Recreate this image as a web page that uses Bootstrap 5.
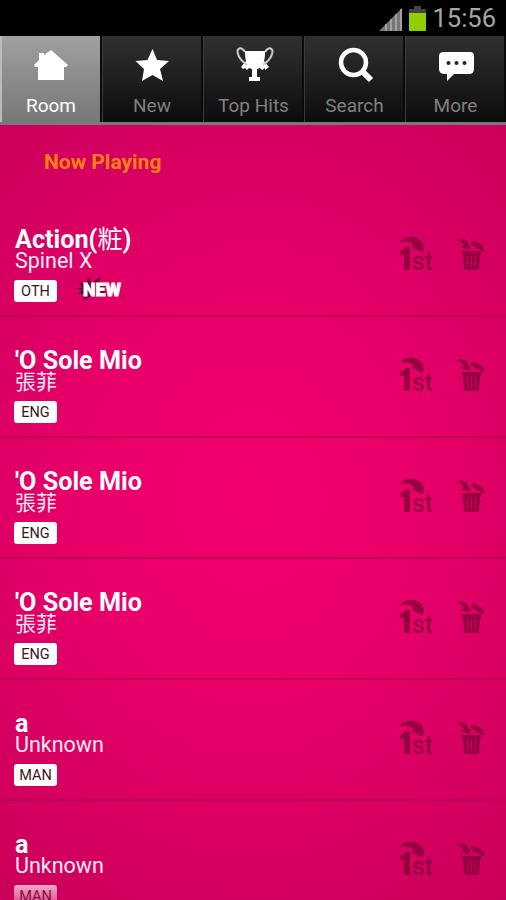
<!DOCTYPE html>
<html lang="en">
<head>
<meta charset="utf-8">
<meta name="viewport" content="width=device-width, initial-scale=1">
<title>Room</title>
<link href="https://cdn.jsdelivr.net/npm/bootstrap@5.3.0/dist/css/bootstrap.min.css" rel="stylesheet">
<style>
body{font-family:Roboto,"Noto Sans CJK TC",sans-serif;background:#000;height:900px;overflow:hidden}
.status{height:36px;padding-right:10px;color:#a6a6a6;font-size:25.5px;line-height:36px}
.tabs{height:89px;border-bottom:3px solid #77797a;background:#0d0d0d}
.tab-item{height:86px;color:#808080;font-size:19px;line-height:24px;background:linear-gradient(#303030,#0c0c0c);border-right:2px solid #0a0a0a;border-left:1px solid #3b3b3b;text-decoration:none;padding-top:9px}
.tab-item svg{width:44px;height:44px;display:block;margin-bottom:5px}
.tab-item.on{color:#fff;background:linear-gradient(#a0a0a0,#777);border-left:2px solid #bbb}
.tab-item:nth-child(n+3) span,.tab-item:nth-child(n+3) svg{margin-left:1px}
.room{height:775px;background:radial-gradient(ellipse 430px 520px at 250px 375px,#f2006d 0%,#eb006a 35%,#d70061 70%,#c80059 100%)}
.playing{height:71px;padding:23px 0 0 44px;color:#ff8110;font-size:21px;line-height:28px;font-weight:700}
.song{height:121px;padding:31px 17px 0 15px;border-bottom:2px solid #bd0053;color:#fff}
.title{font-size:25.2px;line-height:25px;font-weight:700;white-space:nowrap}
.title .han{font-weight:400}
.artist{font-size:21.5px;line-height:22px;margin-top:-2px;white-space:nowrap;color:#ffeaf3}
.artist.han{font-size:21px}
.lang{width:43px;height:22px;margin-top:8px;margin-left:-1px;border-radius:3px;background:#fff;color:#3a1420;font-size:14.5px;line-height:23px}
.song.fading .lang{background:linear-gradient(#f3a9ca,#d93b80);color:#820c45}
.burst{width:50px;height:32px;margin:1px 0 -12px 16px}
.tools{margin-top:8px;gap:20px;opacity:.78}
</style>
<script src="https://cdn.jsdelivr.net/npm/bootstrap@5.3.0/dist/js/bootstrap.bundle.min.js"></script>
</head>
<body>
<svg class="d-none">
  <symbol id="first" viewBox="0 0 36 40">
    <g fill="#840039">
      <path d="M1 7C5 1 15 0 21 5c3 2 4 6 4 10l-3 2-9-5 2-2C11 6 7 6 1 7Z"/>
      <path d="M11 12v23H5V20H1v-4c3-1 5-2 5-4Z"/>
      <text x="13" y="35" font-family="Roboto, sans-serif" font-weight="500" font-size="26" textLength="21" lengthAdjust="spacingAndGlyphs">st</text>
    </g>
  </symbol>
  <symbol id="trash" viewBox="0 0 34 40">
    <g fill="#840039">
      <path d="M0 5c6-3 12-2 14 5l2 1-2 4-8-3 3-2C7 7 5 5 0 5Z"/>
      <path d="m16 7 3-1 8 4 3 6-3 0-11-7Z"/>
      <path d="M7 16h19v4h-1l-1 13q0 2-2 2H11q-2 0-2-2L8 20H7Z"/>
    </g>
    <path d="m12.500 21 .5 11M16.500 21v11M20.500 21l-.5 11" stroke="#c80059" stroke-width="1.2"/>
  </symbol>
</svg>

<header class="status d-flex justify-content-end align-items-center">
  <svg width="50" height="28" viewBox="0 0 50 28" class="me-1">
    <path d="M1 27 24 4v23Z" fill="#777"/>
    <path d="M8 20v7M13 15v12M18 10v17M23 5v22" stroke="#b0b0b0" stroke-width="1.5"/>
    <path d="M31 5h5V2h7v3h5v5H31Z" fill="#444"/><path d="M31 9h17v18H31Z" fill="#8fce00"/>
  </svg>
  <span class="clock">15:56</span>
</header>

<nav class="tabs d-flex">
  <a class="tab-item on d-flex flex-column align-items-center col" href="#">
    <svg viewBox="0 0 44 44" fill="#fff"><path d="m5 20 5-5V8h5v2l7-5 17 15-2 2h-2v13H9V22H6Z"/></svg><span>Room</span></a>
  <a class="tab-item d-flex flex-column align-items-center col" href="#">
    <svg viewBox="0 0 44 44" fill="#fff"><path d="m22.500 4 4.500 11 12 1-9 8 3 12-10.500-6L12 36l2-12-8.500-8 12-1Z"/></svg><span>New</span></a>
  <a class="tab-item d-flex flex-column align-items-center col" href="#">
    <svg viewBox="0 0 44 44" fill="#fff"><path d="M13 6h20c0 3 0 7-1 10l5 6-4 3v-2l-3 2-2-2-3 1v8h3v4H17v-4h3v-8l-3-1-2 2-2-2-2 1-2-2 5-6c-1-3-1-7-1-10Z"/><path d="M13 7C9 1 4 3 6 9c1 5 5 8 9 11M33 7c4-6 9-4 7 2-1 5-5 8-9 11" fill="none" stroke="#ccc" stroke-width="2"/></svg><span>Top Hits</span></a>
  <a class="tab-item d-flex flex-column align-items-center col" href="#">
    <svg viewBox="0 0 44 44" fill="none" stroke="#fff"><circle cx="20.500" cy="17.500" r="12.500" stroke-width="4.500"/><path d="m29 26 9 9" stroke-width="6"/></svg><span>Search</span></a>
  <a class="tab-item d-flex flex-column align-items-center col" href="#">
    <svg viewBox="0 0 44 44" fill="#fff"><path d="M10 7h26q4 0 4 4v13q0 5-5 5H20l-7 7v-7h-2q-6 0-6-5V11q0-4 5-4Z"/><g fill="#222"><circle cx="14.500" cy="18" r="2"/><circle cx="22.500" cy="18" r="2"/><circle cx="30.500" cy="18" r="2"/></g></svg><span>More</span></a>
</nav>

<main class="room overflow-hidden">
  <div class="playing">Now Playing</div>
  <div class="song d-flex justify-content-between">
    <div><div class="title">Action(<span class="han">粧</span>)</div><div class="artist">Spinel X</div>
      <div class="d-flex"><div class="lang text-center">OTH</div>
        <svg class="burst" viewBox="0 0 50 32"><path d="m1 15 8 0-4-7 8 4 2-9 4 7 9-7-2 7 7 1-2 12-12 0-9 4 1-6-7 0 5-4Z" fill="#6b0830"/><text x="10" y="23" font-family="Roboto, sans-serif" font-weight="900" font-size="19" fill="#fff" stroke="#fff" stroke-width=".8" textLength="38" lengthAdjust="spacingAndGlyphs">NEW</text></svg></div></div>
    <div class="tools d-flex"><svg width="36" height="40"><use href="#first"/></svg><svg width="34" height="40"><use href="#trash"/></svg></div>
  </div>
  <div class="song d-flex justify-content-between">
    <div><div class="title">'O Sole Mio</div><div class="artist han">張菲</div><div class="lang text-center">ENG</div></div>
    <div class="tools d-flex"><svg width="36" height="40"><use href="#first"/></svg><svg width="34" height="40"><use href="#trash"/></svg></div>
  </div>
  <div class="song d-flex justify-content-between">
    <div><div class="title">'O Sole Mio</div><div class="artist han">張菲</div><div class="lang text-center">ENG</div></div>
    <div class="tools d-flex"><svg width="36" height="40"><use href="#first"/></svg><svg width="34" height="40"><use href="#trash"/></svg></div>
  </div>
  <div class="song d-flex justify-content-between">
    <div><div class="title">'O Sole Mio</div><div class="artist han">張菲</div><div class="lang text-center">ENG</div></div>
    <div class="tools d-flex"><svg width="36" height="40"><use href="#first"/></svg><svg width="34" height="40"><use href="#trash"/></svg></div>
  </div>
  <div class="song d-flex justify-content-between">
    <div><div class="title">a</div><div class="artist">Unknown</div><div class="lang text-center">MAN</div></div>
    <div class="tools d-flex"><svg width="36" height="40"><use href="#first"/></svg><svg width="34" height="40"><use href="#trash"/></svg></div>
  </div>
  <div class="song fading d-flex justify-content-between">
    <div><div class="title">a</div><div class="artist">Unknown</div><div class="lang text-center">MAN</div></div>
    <div class="tools d-flex"><svg width="36" height="40"><use href="#first"/></svg><svg width="34" height="40"><use href="#trash"/></svg></div>
  </div>
</main>
</body>
</html>
